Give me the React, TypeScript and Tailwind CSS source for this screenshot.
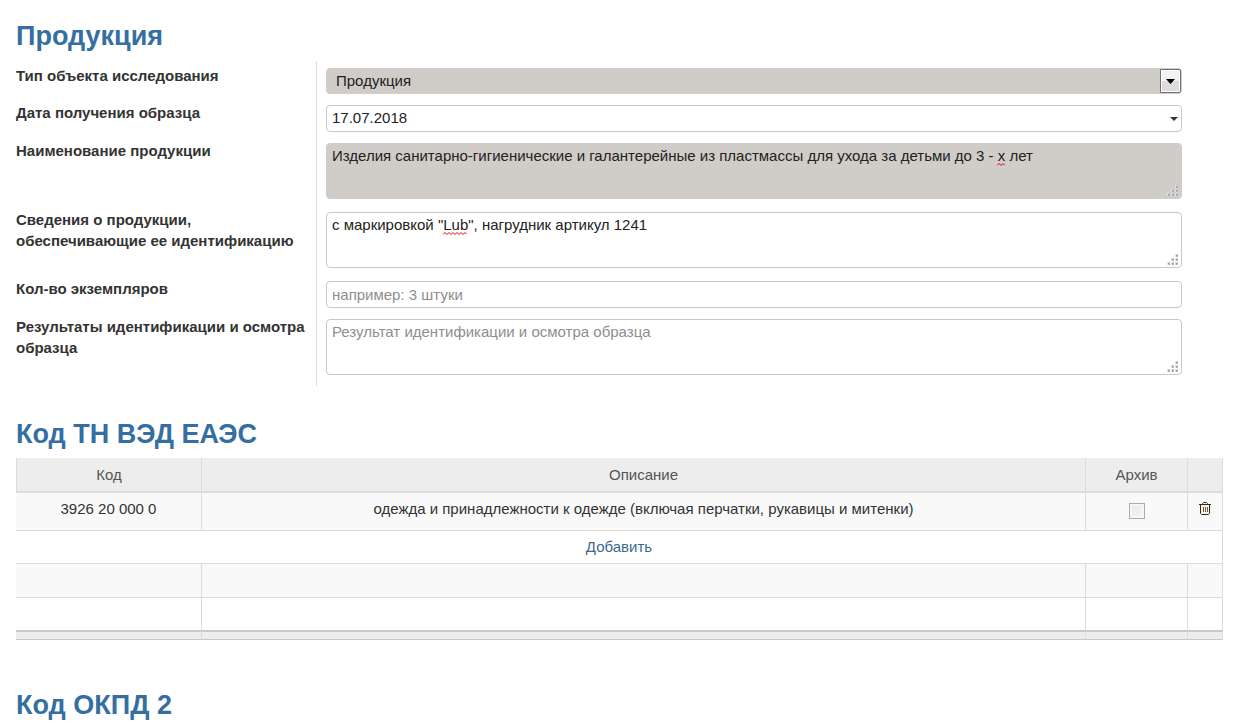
import { useState } from 'react';
import type { ReactNode } from 'react';

const fieldClass =
  'block w-full rounded-[4px] border border-[#c8c8c8] bg-white px-[5px] text-[15px] leading-[21px] text-[#222222] placeholder:text-[#8e8e8e] outline-none focus:border-[#7aa7cc]';

const Heading = ({ children }: { children: ReactNode }) => (
  <h2 className="text-[27px] leading-9 font-bold text-[#356fa2]">{children}</h2>
);

const ResizeGrip = () => (
  <svg
    className="pointer-events-none absolute right-1 bottom-[3px]"
    width="11"
    height="11"
    viewBox="0 0 11 11"
    shapeRendering="crispEdges"
    aria-hidden="true"
  >
    {[
      [8, 0],
      [4, 4],
      [8, 4],
      [0, 8],
      [4, 8],
      [8, 8],
    ].map(([x, y]) => (
      <g key={`${x}-${y}`}>
        <path d={`M${x} ${y}h3v3h-3z`} fill="#e2e2e2" />
        <path d={`M${x + 1} ${y + 1}h2v2h-2z`} fill="#b4b4b4" />
        <path d={`M${x + 2} ${y}h1v2h-1z`} fill="#bcbcbc" />
        <path d={`M${x + 1} ${y + 1}h1v1h-1z`} fill="#8e8e8e" />
      </g>
    ))}
  </svg>
);

const Squiggle = ({ width, className }: { width: number; className: string }) => {
  let d = 'M0 2.5';
  for (let x = 2; x <= width; x += 2) {
    d += `L${x} ${x % 4 === 2 ? 0.5 : 2.5}`;
  }
  return (
    <svg
      className={`pointer-events-none absolute ${className}`}
      width={width}
      height="3"
      viewBox={`0 0 ${width} 3`}
      aria-hidden="true"
    >
      <path d={d} fill="none" stroke="#f00000" strokeWidth="1" />
    </svg>
  );
};

const TrashIcon = () => (
  <svg width="12" height="13" viewBox="0 0 12 13" fill="none" stroke="#2b2b2b" aria-hidden="true">
    <path d="M1.5 3v8.5l1 1h7l1-1V3" fill="#fdf3dc" />
    <path d="M0 2.5h12M3.5 2V1.5l1-1h3l1 1V2" />
    <path d="M4.5 5v5M6.5 5v5M8.5 5v5" stroke="#6b5a44" />
  </svg>
);

type RowProps = {
  id: string;
  label: string;
  tall?: boolean;
  children: ReactNode;
};

const Row = ({ id, label, tall, children }: RowProps) => (
  <div className="grid grid-cols-[300px_1fr]">
    <label htmlFor={id} className="pt-1 pr-2 text-[15px] leading-[21px] font-bold text-[#333333]">
      {label}
    </label>
    <div className={`border-l border-[#dcdcdc] pt-[7px] pl-[9px] ${tall ? 'pb-[6px]' : 'pb-1'}`}>
      <div className="relative">{children}</div>
    </div>
  </div>
);

const ProductForm = () => {
  const [date, setDate] = useState('17.07.2018');
  const [name, setName] = useState(
    'Изделия санитарно-гигиенические и галантерейные из пластмассы для ухода за детьми до 3 - х лет',
  );
  const [info, setInfo] = useState('с маркировкой "Lub", нагрудник артикул 1241');

  return (
    <form className="mt-[7px] mr-[41px]">
      <Row id="type" label="Тип объекта исследования">
        <select
          id="type"
          className="block h-[26px] w-full appearance-none rounded-[4px] border border-[#d0ccc7] bg-[#d0ccc7] pr-6 pb-[2px] pl-[9px] text-[15px] leading-[21px] text-[#222222] outline-none"
        >
          <option>Продукция</option>
        </select>
        <span className="pointer-events-none absolute top-px right-px flex h-6 w-[21px] items-center justify-center rounded-r-[2px] border border-[#707070] bg-linear-to-b from-[#f2f2f2] from-50% to-[#dcdcdc] to-50% ring-1 ring-white ring-inset">
          <svg width="9" height="5" viewBox="0 0 9 5" aria-hidden="true">
            <path d="M0 0h9L4.5 5z" fill="#000000" />
          </svg>
        </span>
      </Row>
      <Row id="date" label="Дата получения образца">
        <input
          id="date"
          type="text"
          value={date}
          onChange={(e) => setDate(e.target.value)}
          className={`${fieldClass} h-[27px] pb-[2px]`}
        />
        <svg
          className="pointer-events-none absolute top-3 right-1"
          width="8"
          height="4"
          viewBox="0 0 8 4"
          aria-hidden="true"
        >
          <path d="M0 0h8L4 4z" fill="#333333" />
        </svg>
      </Row>
      <Row id="name" label="Наименование продукции" tall>
        <textarea
          id="name"
          value={name}
          spellCheck={false}
          onChange={(e) => setName(e.target.value)}
          className="block h-14 w-full resize-none rounded-[4px] border border-[#d0ccc7] bg-[#d0ccc7] px-[5px] py-px text-[15px] leading-[21px] text-[#222222] outline-none"
        />
        <Squiggle width={8} className="top-5 left-[671px]" />
        <ResizeGrip />
      </Row>
      <Row id="info" label="Сведения о продукции, обеспечивающие ее идентификацию" tall>
        <textarea
          id="info"
          value={info}
          spellCheck={false}
          onChange={(e) => setInfo(e.target.value)}
          className={`${fieldClass} h-14 resize-none py-px`}
        />
        <Squiggle width={24} className="top-5 left-[117px]" />
        <ResizeGrip />
      </Row>
      <Row id="count" label="Кол-во экземпляров">
        <input
          id="count"
          type="text"
          placeholder="например: 3 штуки"
          className={`${fieldClass} h-[27px]`}
        />
      </Row>
      <Row id="result" label="Результаты идентификации и осмотра образца" tall>
        <textarea
          id="result"
          placeholder="Результат идентификации и осмотра образца"
          className={`${fieldClass} h-14 resize-none py-px`}
        />
        <ResizeGrip />
      </Row>
      <div className="ml-[300px] h-[5px] border-l border-[#dcdcdc]" />
    </form>
  );
};

const CodeTable = () => {
  const [archived, setArchived] = useState(false);

  return (
    <table className="mt-[6px] w-full table-fixed border-separate border-spacing-0 text-center text-[15px] leading-[21px] text-[#333333] [&_td]:border-r [&_td]:border-[#dcdcdc] [&_th]:border-r [&_th]:border-[#dcdcdc]">
      <colgroup>
        <col className="w-[186px]" />
        <col />
        <col className="w-[102px]" />
        <col className="w-[35px]" />
      </colgroup>
      <thead className="bg-[#ededed] text-[#555555]">
        <tr className="h-[35px] [&>th]:border-b-2 [&>th]:font-normal">
          <th className="border-l">Код</th>
          <th>Описание</th>
          <th>Архив</th>
          <th />
        </tr>
      </thead>
      <tbody className="[&_td]:border-b">
        <tr className="h-[38px] bg-[#f9f9f9] [&>td]:pt-[5px] [&>td]:align-top">
          <td>3926 20 000 0</td>
          <td>одежда и принадлежности к одежде (включая перчатки, рукавицы и митенки)</td>
          <td>
            <input
              type="checkbox"
              aria-label="Архив"
              checked={archived}
              onChange={(e) => setArchived(e.target.checked)}
              className="mx-auto mt-[5px] block size-4 appearance-none border border-[#a9adb0] bg-linear-to-br from-[#e2e4e7] to-[#fafafa] ring-2 ring-[#f6f6f6] ring-inset checked:from-[#356fa2] checked:to-[#356fa2]"
            />
          </td>
          <td>
            <button type="button" aria-label="Удалить" className="mx-auto mt-1 block cursor-pointer">
              <TrashIcon />
            </button>
          </td>
        </tr>
        <tr className="h-[33px]">
          <td colSpan={4} className="pb-[2px]">
            <a href="#add" className="text-[#3b6991] hover:underline">
              Добавить
            </a>
          </td>
        </tr>
        <tr className="h-[34px] bg-[#f9f9f9]">
          <td />
          <td />
          <td />
          <td />
        </tr>
        <tr className="h-8 [&>td]:border-b-0">
          <td />
          <td />
          <td />
          <td />
        </tr>
      </tbody>
      <tfoot className="bg-[#ededed]">
        <tr className="h-[10px] [&>td]:border-t-2 [&>td]:border-b [&>td]:border-t-[#c8c8c8] [&>td]:border-b-[#c8c8c8] [&>td]:p-0">
          <td />
          <td />
          <td />
          <td />
        </tr>
      </tfoot>
    </table>
  );
};

const App = () => {
  return (
    <main className="bg-white pt-[18px] pr-3 pl-4 font-['Liberation_Sans',Arial,sans-serif]">
      <section>
        <Heading>Продукция</Heading>
        <ProductForm />
      </section>
      <section className="mt-[30px]">
        <Heading>Код ТН ВЭД ЕАЭС</Heading>
        <CodeTable />
      </section>
      <section className="mt-[47px]">
        <Heading>Код ОКПД 2</Heading>
      </section>
    </main>
  );
};

export default App;
